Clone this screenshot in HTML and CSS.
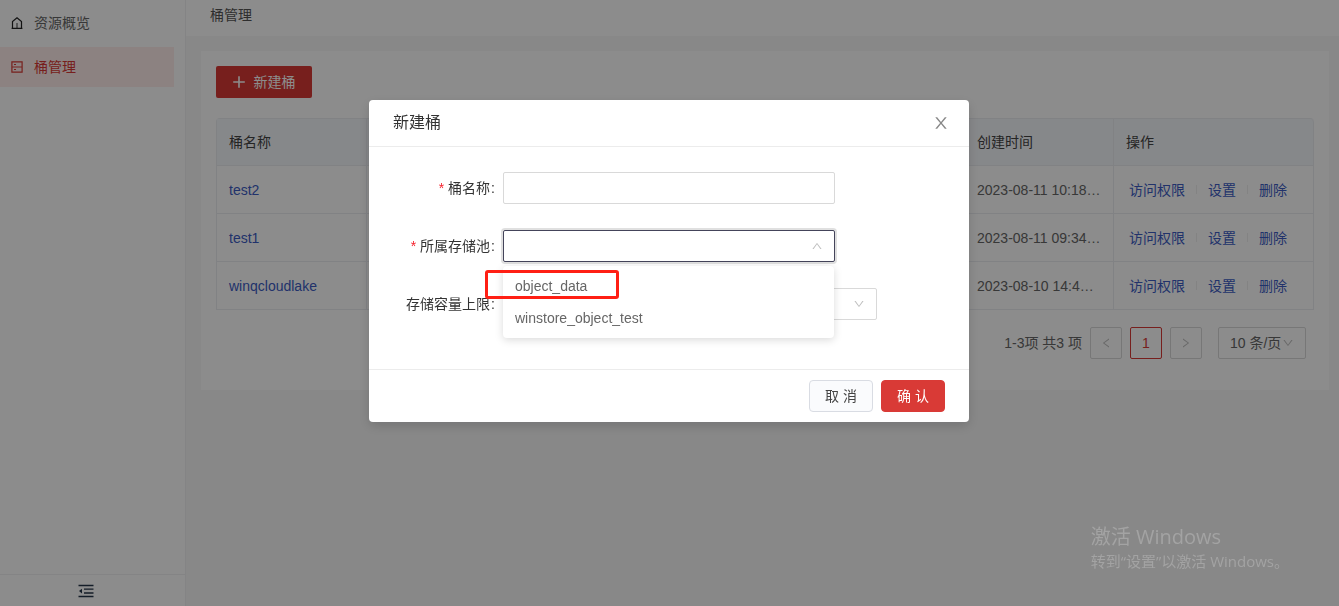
FILE: index.html
```html
<!DOCTYPE html>
<html lang="zh-CN">
<head>
  <meta charset="UTF-8" />
  <meta name="viewport" content="width=device-width, initial-scale=1.0" />
  <title>桶管理</title>
  <link rel="stylesheet" href="styles.css">
</head>
<body>
  <svg class="sprite" aria-hidden="true">
    <symbol id="icon-down" viewBox="0 0 1024 1024">
      <path d="M884 256h-75c-5.1 0-9.9 2.5-12.9 6.6L512 654.2 227.9 262.6c-3-4.1-7.8-6.6-12.9-6.6h-75c-6.5 0-10.3 7.4-6.5 12.7l352.6 486.1c12.8 17.6 39 17.6 51.7 0l352.6-486.1c3.9-5.3.1-12.7-6.4-12.7z" fill="currentColor"/>
    </symbol>
  </svg>

  <div class="layout">
    <aside class="sidebar">
      <nav class="menu">
        <a href="#" class="menu-item">
          <svg class="menu-icon" width="12" height="12" viewBox="0 0 12 12" fill="none" stroke="currentColor" stroke-width="1.2"><path d="M1.5 11.4V4.6L6 .9l4.5 3.7v6.8M.6 11.4h10.8"/><path d="M6 11V6" stroke-width="1.5" opacity=".6"/></svg>
          资源概览
        </a>
        <a href="#" class="menu-item active">
          <svg class="menu-icon" width="12" height="12" viewBox="0 0 12 12" fill="none" stroke="currentColor" stroke-width="1"><path d="M.9 .9h10.2v10.2H.9z" stroke-width="1.2"/><path d="M1 6h10" stroke-width="1.6" opacity=".6"/><path d="M3 3.5h2M3 8.5h2"/></svg>
          桶管理
        </a>
      </nav>
      <button class="fold" aria-label="收起菜单">
        <svg width="16" height="14" viewBox="0 0 16 14" fill="none" stroke="currentColor" stroke-width="1.3"><path d="M.5 1.5h15M6 5.2h9.5M6 9h9.5M.5 12.5h15"/><path d="M4 4.8v4.6L1 7.1z" fill="currentColor" stroke="none"/></svg>
      </button>
    </aside>

    <div class="main">
      <header class="topbar">桶管理</header>

      <main class="card">
        <button class="btn-create">
          <svg width="12" height="12" viewBox="0 0 12 12" stroke="currentColor" stroke-width="1.6"><path d="M6 .2v11.6M.2 6h11.6"/></svg>
          新建桶
        </button>

        <table class="bucket-table">
          <colgroup>
            <col class="col-name">
            <col>
            <col class="col-time">
            <col class="col-action">
          </colgroup>
          <thead>
            <tr><th>桶名称</th><th></th><th>创建时间</th><th>操作</th></tr>
          </thead>
          <tbody>
            <tr>
              <td><a href="#">test2</a></td>
              <td></td>
              <td>2023-08-11 10:18…</td>
              <td><div class="actions"><a href="#">访问权限</a><a href="#">设置</a><a href="#">删除</a></div></td>
            </tr>
            <tr>
              <td><a href="#">test1</a></td>
              <td></td>
              <td>2023-08-11 09:34…</td>
              <td><div class="actions"><a href="#">访问权限</a><a href="#">设置</a><a href="#">删除</a></div></td>
            </tr>
            <tr>
              <td><a href="#">winqcloudlake</a></td>
              <td></td>
              <td>2023-08-10 14:4…</td>
              <td><div class="actions"><a href="#">访问权限</a><a href="#">设置</a><a href="#">删除</a></div></td>
            </tr>
          </tbody>
        </table>

        <div class="pagination">
          <span>1-3项 共3 项</span>
          <button class="page" aria-label="上一页"><svg class="arrow prev" width="12" height="12"><use href="#icon-down"/></svg></button>
          <button class="page current">1</button>
          <button class="page" aria-label="下一页"><svg class="arrow next" width="12" height="12"><use href="#icon-down"/></svg></button>
          <div class="select-wrap page-size">
            <select aria-label="每页条数"><option>10 条/页</option></select>
            <svg class="arrow" width="12" height="12"><use href="#icon-down"/></svg>
          </div>
        </div>
      </main>
    </div>
  </div>

  <div class="mask">
    <div class="modal" role="dialog" aria-labelledby="modal-title">
      <div class="modal-header">
        <h2 id="modal-title">新建桶</h2>
        <button class="close" aria-label="关闭">
          <svg width="18" height="18" viewBox="0 0 1024 1024" fill="currentColor"><path d="M563.8 512l262.5-312.9c4.4-5.2.7-13.1-6.1-13.1h-79.8c-4.7 0-9.2 2.1-12.3 5.7L511.6 449.8 295.1 191.7c-3-3.6-7.5-5.7-12.3-5.7H203c-6.8 0-10.5 7.9-6.1 13.1L459.4 512 196.9 824.9A7.95 7.95 0 0 0 203 838h79.8c4.7 0 9.2-2.1 12.3-5.7l216.5-258.1 216.5 258.1c3 3.6 7.5 5.7 12.3 5.7h79.8c6.8 0 10.5-7.9 6.1-13.1L563.8 512z"/></svg>
        </button>
      </div>

      <form class="modal-body">
        <div class="form-row">
          <label for="bucket-name" class="required">桶名称</label>
          <input type="text" id="bucket-name">
        </div>
        <div class="form-row">
          <label for="pool" class="required">所属存储池</label>
          <div class="select-wrap open">
            <select id="pool"><option></option></select>
            <svg class="arrow up" width="12" height="12"><use href="#icon-down"/></svg>
            <ul class="dropdown" role="listbox">
              <li role="option">object_data</li>
              <li role="option">winstore_object_test</li>
            </ul>
            <div class="highlight"></div>
          </div>
        </div>
        <div class="form-row">
          <label for="quota">存储容量上限</label>
          <div class="quota">
            <input type="text" id="quota">
            <div class="select-wrap">
              <select aria-label="单位"><option></option></select>
              <svg class="arrow" width="12" height="12"><use href="#icon-down"/></svg>
            </div>
          </div>
        </div>
      </form>

      <div class="modal-footer">
        <button class="btn">取 消</button>
        <button class="btn btn-primary">确 认</button>
      </div>
    </div>
  </div>

  <div class="watermark">
    <p class="watermark-title">激活 Windows</p>
    <p>转到“设置”以激活 Windows。</p>
  </div>
</body>
</html>
```
FILE: styles.css
```css
* {
  box-sizing: border-box;
}

body {
  margin: 0;
  font-family: "Liberation Sans", "Noto Sans CJK SC", sans-serif;
  font-size: 14px;
  line-height: 22px;
  color: #666;
  background: #f7f7f8;
}

a {
  color: #3c5cc4;
  text-decoration: none;
}

button, input, select {
  font: inherit;
  color: inherit;
}

button {
  padding: 0;
  cursor: pointer;
}

.sprite {
  display: none;
}

.layout {
  display: flex;
  min-height: 100vh;
}

/* 左侧菜单 */
.sidebar {
  display: flex;
  flex-direction: column;
  width: 186px;
  background: #fff;
  border-right: 1px solid #f0f0f2;
}

.menu {
  display: flex;
  flex-direction: column;
  flex: 1;
  gap: 4px;
  padding: 3px 11px 0 0;
}

.menu-item {
  display: flex;
  align-items: center;
  gap: 11px;
  height: 40px;
  padding-left: 11px;
  color: #666;
}

.menu-icon {
  color: #222;
}

.menu-item.active,
.menu-item.active .menu-icon {
  color: #d93a36;
}

.menu-item.active {
  background: #ffedeb;
}

.fold {
  display: flex;
  align-items: center;
  justify-content: center;
  height: 32px;
  padding-right: 14px;
  color: #26364a;
  background: none;
  border: none;
  border-top: 1px solid #f0f0f2;
}

/* 内容区 */
.main {
  flex: 1;
  min-width: 0;
}

.topbar {
  height: 36px;
  padding: 4px 24px;
  color: #555;
  background: #fff;
}

.card {
  margin: 15px 10px 15px 15px;
  padding: 15px 15px 31px;
  background: #fff;
}

.btn-create {
  display: flex;
  align-items: center;
  justify-content: center;
  gap: 9px;
  width: 96px;
  height: 32px;
  color: #fff;
  background: #d93a36;
  border: none;
  border-radius: 2px;
}

.bucket-table {
  width: 100%;
  margin-top: 20px;
  table-layout: fixed;
  border-spacing: 0;
  border-top: 1px solid #ebedf1;
  border-left: 1px solid #ebedf1;
  border-radius: 4px 4px 0 0;
}

.col-name {
  width: 150px;
}

.col-time {
  width: 149px;
}

.col-action {
  width: 200px;
}

.bucket-table th,
.bucket-table td {
  height: 48px;
  padding: 0 12px;
  text-align: left;
  font-weight: normal;
  white-space: nowrap;
  border-right: 1px solid #ebedf1;
  border-bottom: 1px solid #ebedf1;
}

.bucket-table th {
  height: 47px;
  color: #444;
  background: #f5f8fb;
}

.bucket-table th:last-child {
  border-top-right-radius: 4px;
}

.actions {
  display: flex;
  padding-left: 3px;
}

.actions a + a {
  display: flex;
  align-items: center;
}

.actions a + a::before {
  content: "";
  width: 1px;
  height: 9px;
  margin: 0 11px;
  background: #eee;
}

.pagination {
  display: flex;
  align-items: center;
  justify-content: flex-end;
  gap: 8px;
  margin-top: 17px;
  padding-right: 8px;
}

.page {
  display: flex;
  align-items: center;
  justify-content: center;
  width: 32px;
  height: 32px;
  color: #bfbfbf;
  background: #fff;
  border: 1px solid #d9d9d9;
  border-radius: 2px;
}

.page.current {
  color: #d93a36;
  border-color: #d93a36;
}

.prev {
  transform: rotate(90deg);
}

.next {
  transform: rotate(-90deg);
}

.up {
  transform: rotate(180deg);
}

/* 表单控件 */
input, select {
  display: block;
  width: 100%;
  height: 32px;
  padding: 0 11px;
  appearance: none;
  background: #fff;
  border: 1px solid #d9d9d9;
  border-radius: 2px;
  outline: none;
}

.select-wrap {
  position: relative;
}

.select-wrap .arrow {
  position: absolute;
  top: 10px;
  right: 12px;
  color: #bfbfbf;
  pointer-events: none;
}

.page-size {
  width: 88px;
  margin-left: 8px;
}

/* 弹窗 */
.mask {
  position: fixed;
  inset: 0;
  padding: 100px 1px 0 0;
  background: rgba(0, 0, 0, 0.45);
}

.modal {
  width: 600px;
  margin: 0 auto;
  background: #fff;
  border-radius: 4px;
  box-shadow: 0 4px 12px rgba(0, 0, 0, 0.15);
}

.modal-header {
  display: flex;
  align-items: center;
  justify-content: space-between;
  height: 47px;
  padding: 0 19px 0 24px;
  border-bottom: 1px solid #ececec;
}

.modal-header h2 {
  margin: 0;
  font-size: 16px;
  font-weight: normal;
  color: #333;
}

.close {
  display: flex;
  color: #888;
  background: none;
  border: none;
}

.modal-body {
  display: flex;
  flex-direction: column;
  gap: 26px;
  padding: 25px 24px 49px;
}

.form-row {
  display: grid;
  grid-template-columns: 102px 332px;
  column-gap: 8px;
  align-items: center;
}

.form-row label {
  text-align: right;
  white-space: nowrap;
  color: #333;
}

.form-row label::after {
  content: ":";
  margin-left: 1px;
}

.required::before {
  content: "*";
  margin-right: 4px;
  color: #f5222d;
}

.open select {
  border-color: #44445a;
  box-shadow: 0 0 0 2px rgba(0, 0, 0, 0.12);
}

.dropdown {
  position: absolute;
  top: 36px;
  left: 0;
  z-index: 1;
  width: 331px;
  margin: 0;
  padding: 4px 0;
  list-style: none;
  background: #fff;
  border-radius: 4px;
  box-shadow: 0 2px 8px rgba(0, 0, 0, 0.15);
}

.dropdown li {
  padding: 5px 12px;
  color: #666;
}

.highlight {
  position: absolute;
  top: 40px;
  left: -18px;
  z-index: 2;
  width: 134px;
  height: 29px;
  border: 3px solid #ff1f14;
  border-radius: 3px;
}

.quota {
  display: grid;
  grid-template-columns: 284px 80px;
  column-gap: 10px;
}

.modal-footer {
  display: flex;
  justify-content: flex-end;
  gap: 8px;
  padding: 10px 24px;
  border-top: 1px solid #ececec;
}

.btn {
  width: 64px;
  height: 32px;
  color: #444;
  background: #fafbfd;
  border: 1px solid #d9dce3;
  border-radius: 4px;
}

.btn-primary {
  color: #fff;
  background: #d93a36;
  border-color: #d93a36;
}

/* 系统水印 */
.watermark {
  position: fixed;
  right: 50px;
  bottom: 34px;
  font-family: "Open Sans", "Noto Sans CJK SC", sans-serif;
  font-size: 15px;
  color: #a3a3a3;
  pointer-events: none;
}

.watermark p {
  margin: 0;
}

.watermark .watermark-title {
  font-size: 20px;
  line-height: 26px;
}
```
